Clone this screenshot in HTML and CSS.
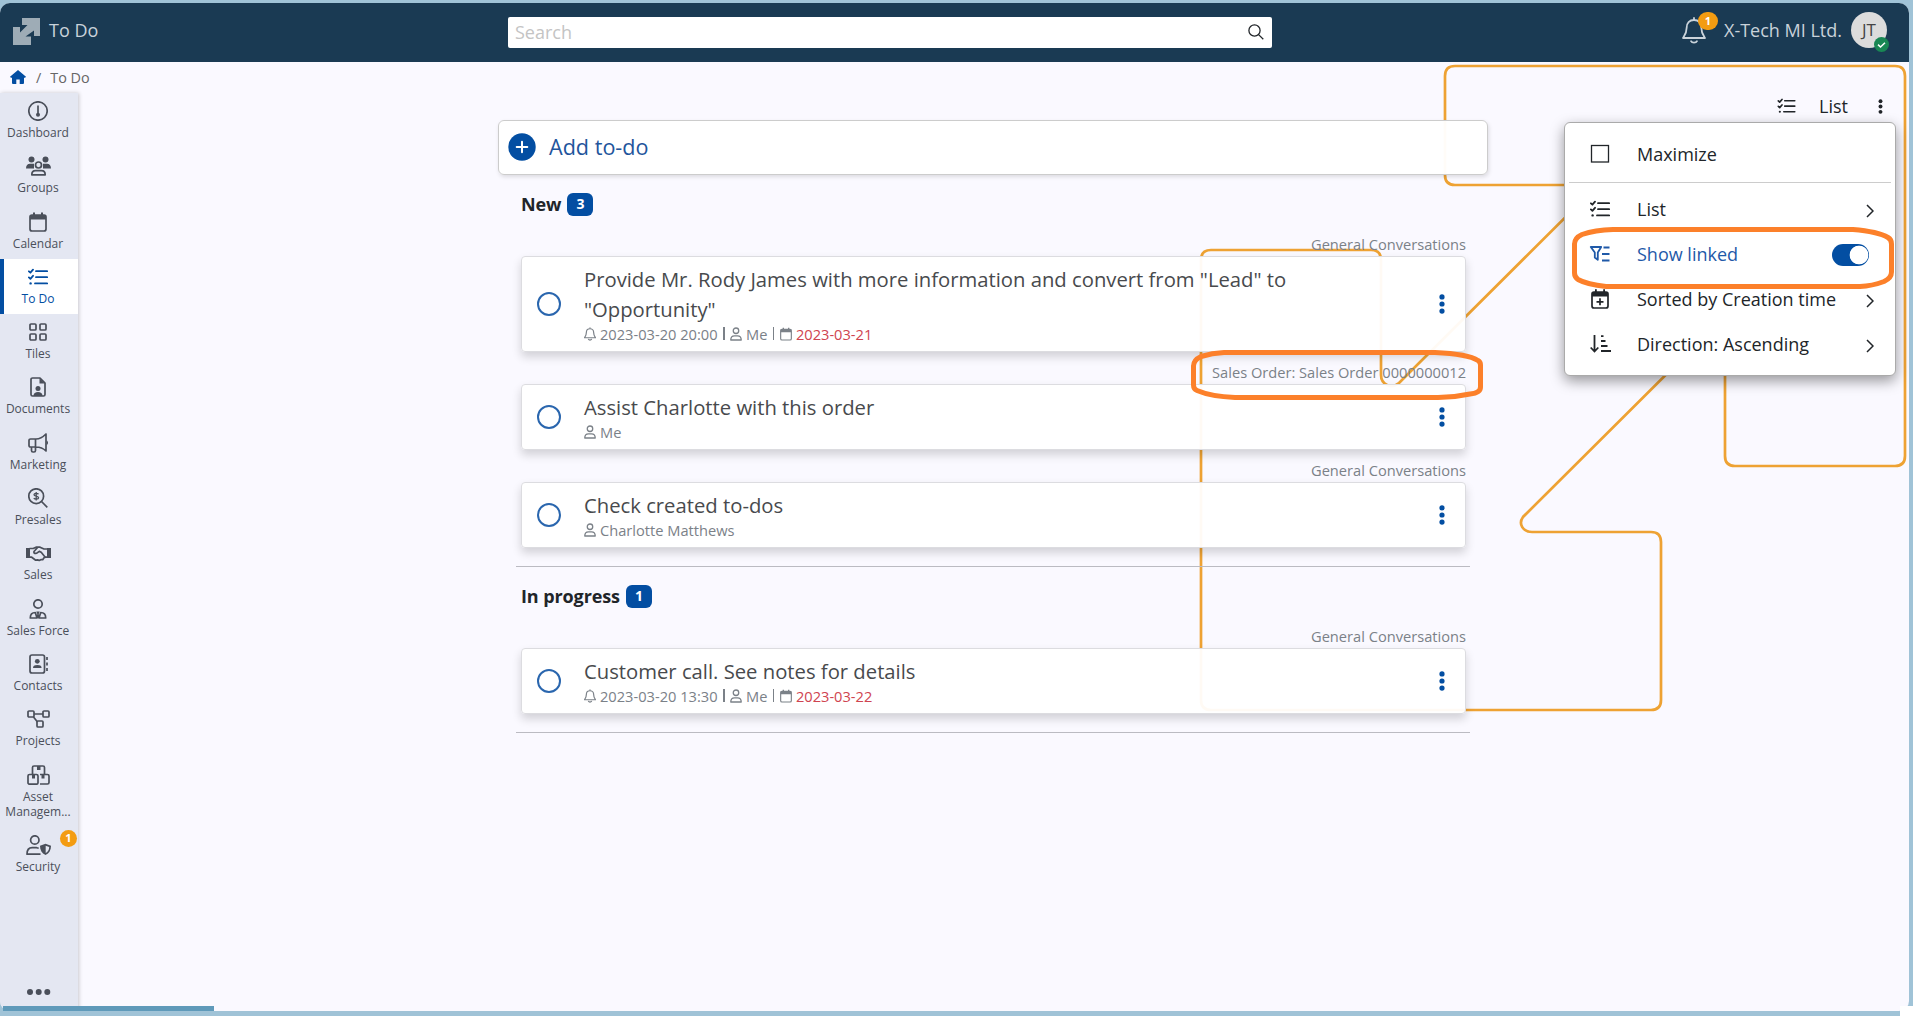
FILE: index.html
```html
<!DOCTYPE html>
<html lang="en">
	<head>
		<meta charset="UTF-8" />
		<meta name="viewport" content="width=device-width, initial-scale=1.0" />
		<title>To Do</title>
		<link rel="stylesheet" href="styles.css">
	</head>
	<body>
		<!-- shared icons -->
		<svg class="sprite">
			<symbol id="i-checklist" viewBox="0 0 20 20">
				<g fill="none" stroke="currentColor" stroke-width="1.8" stroke-linecap="round" stroke-linejoin="round">
					<path d="M8 4.2h11.2M8 10.2h11.2M7 16.4h12.2" />
					<path d="M.9 4.3l1.5 1.4L5 2.7M.9 10.4l1.5 1.4L5 8.8" />
				</g>
				<circle cx="2.6" cy="16.4" r="1.2" fill="currentColor" />
			</symbol>
			<symbol id="i-calendar" viewBox="0 0 18 20">
				<rect x="1" y="3" width="16" height="16" rx="2" fill="none" stroke="currentColor" stroke-width="1.7" />
				<path d="M1 3h16v4.5H1zM4 .5h2v3H4zM12 .5h2v3h-2z" fill="currentColor" />
			</symbol>
			<symbol id="i-user" viewBox="0 0 14 16">
				<g fill="none" stroke="currentColor" stroke-width="1.5" stroke-linejoin="round">
					<circle cx="7" cy="4.2" r="3.2" />
					<path d="M.9 15C.9 12 2.700 10.300 5.200 10.300H8.800C11.300 10.300 13.100 12 13.100 15z" />
				</g>
			</symbol>
			<symbol id="i-bell" viewBox="0 0 24 27">
				<g fill="none" stroke="currentColor" stroke-linejoin="round" stroke-linecap="round">
					<path d="M12 1v2M12 3c-4.6 0-7.3 3.3-7.3 7.5 0 5.5-1.7 7.500-3.700 10.500h22c-2-3-3.700-5-3.700-10.500C19.300 6.300 16.600 3 12 3z" />
					<path d="M9 24.200c1 2 5 2 6 0" />
				</g>
			</symbol>
			<symbol id="i-dots" viewBox="0 0 6 20">
				<circle cx="3" cy="2.9" r="2.6" /><circle cx="3" cy="10" r="2.6" /><circle cx="3" cy="17.1" r="2.6" />
			</symbol>
			<symbol id="i-chevron" viewBox="0 0 8 14">
				<path d="M1 1l6 6-6 6" fill="none" stroke="currentColor" stroke-width="1.5" />
			</symbol>
		</svg>

		<div class="app">
			<header class="header">
				<div class="brand">
					<svg class="logo" viewBox="0 0 27 27"><path d="M9 0h18v18h-6v-5.500L12.500 18.500H18V27H0V9h7v5.500L14.500 7H9z" /></svg>
					<span>To Do</span>
				</div>
				<div class="search">
					<span>Search</span>
					<svg viewBox="0 0 16 16"><circle cx="6.5" cy="6.5" r="5.6" /><path d="M10.6 10.6l4.7 4.7" /></svg>
				</div>
				<div class="account">
					<div class="bell">
						<svg><use href="#i-bell" /></svg>
						<span class="count">1</span>
					</div>
					<span class="company">X-Tech MI Ltd.</span>
					<div class="avatar">
						JT
						<svg class="status" viewBox="0 0 15 15"><circle cx="7.5" cy="7.5" r="7.5" /><path d="M4 7.600l2.500 2.400L11 5.800" /></svg>
					</div>
				</div>
			</header>

			<nav class="breadcrumb">
				<svg viewBox="0 0 16 14"><path d="M8 0l8 6.700-.9 1H14V13a1 1 0 0 1-1 1H9.700V9.500H6.300V14H3a1 1 0 0 1-1-1V7.700H.9L0 6.700z" /></svg>
				<span class="slash">/</span>
				<span>To Do</span>
			</nav>

			<div class="body">
				<aside class="sidebar">
					<a class="nav-item">
						<svg viewBox="0 0 20 20"><circle cx="10" cy="10" r="9.2" /><path d="M10 4.500v9" /><circle class="solid" cx="10" cy="13.800" r="2" /></svg>
						<span>Dashboard</span>
					</a>
					<a class="nav-item">
						<svg class="wide" viewBox="0 0 25 20"><g class="solid"><circle cx="5.5" cy="3.5" r="3" /><circle cx="19.5" cy="3.5" r="3" /><path d="M0 12.500c0-3 1.500-4.700 4-4.700h4v4.700zM25 12.500c0-3-1.500-4.700-4-4.700h-4v4.700z" /></g><circle class="halo" cx="12.5" cy="9" r="3" /><path d="M5.800 18.800c0-3 1.700-4.200 3.700-4.200h6c2 0 3.700 1.200 3.700 4.200z" /></svg>
						<span>Groups</span>
					</a>
					<a class="nav-item">
						<svg class="narrow"><use href="#i-calendar" /></svg>
						<span>Calendar</span>
					</a>
					<a class="nav-item active">
						<svg><use href="#i-checklist" /></svg>
						<span>To Do</span>
					</a>
					<a class="nav-item">
						<svg viewBox="0 0 20 20"><rect x="2" y="2" width="6" height="6" rx="1" /><rect x="12" y="2" width="6" height="6" rx="1" /><rect x="2" y="12" width="6" height="6" rx="1" /><rect x="12" y="12" width="6" height="6" rx="1" /></svg>
						<span>Tiles</span>
					</a>
					<a class="nav-item">
						<svg viewBox="0 0 20 20"><path d="M4.500 1H12l5 5v11.500a1.500 1.500 0 0 1-1.500 1.500h-11A1.500 1.500 0 0 1 3 17.500v-15A1.500 1.500 0 0 1 4.500 1z" /><path class="solid" d="M11.500 1v5.500H17zM5.500 19c0-3 2-4 4.500-4s4.500 1 4.500 4z" /><circle class="solid" cx="10" cy="11.5" r="2.5" /></svg>
						<span>Documents</span>
					</a>
					<a class="nav-item">
						<svg viewBox="0 0 20 20"><path d="M18 1v17c-3-3-6-4-10-4H2.500A1.500 1.500 0 0 1 1 12.500v-5A1.500 1.500 0 0 1 2.500 6H8c4 0 7-2 10-5zM7.500 6v8M3.500 14v3.500a1.500 1.500 0 0 0 1.500 1.500h1a1.500 1.500 0 0 0 1.500-1.500V14" /><path class="solid" d="M18.500 7.500c2 .7 2 3.800 0 4.500z" /></svg>
						<span>Marketing</span>
					</a>
					<a class="nav-item">
						<svg viewBox="0 0 20 20"><circle cx="8.2" cy="8.2" r="7.4" /><path d="M13.500 13.500L19.300 19.300" /><path class="thin" d="M10.500 6.200c-.5-1-4.500-1.400-4.500.5 0 2 4.600 1 4.600 3.100 0 1.900-4 1.700-4.800.4M8.200 3.900v8.700" /></svg>
						<span>Presales</span>
					</a>
					<a class="nav-item">
						<svg class="wide" viewBox="0 0 25 20"><path class="solid" d="M0 5h4v10H0zM21 5h4v10h-4z" /><path d="M3.500 5.500h3.700L10 4.200h4l4 1.800h3.500M3.500 14.200h2.200l4 3 2-.3 1.500.6 2-1 1.500.2 1.300-2 1.500-.5H21.500M15 9l4 5M14.500 4.200h-2.700L8 8.500c-.6 2 2 2.500 3.500 1.200L13.300 8.300 15.500 9.500" /></svg>
						<span>Sales</span>
					</a>
					<a class="nav-item">
						<svg viewBox="0 0 20 20"><circle cx="10" cy="5" r="4.2" /><path d="M2.300 19c0-3.500 1.900-5.500 5-5.500L9 19zM17.700 19c0-3.500-1.900-5.500-5-5.500L11 19z" /><path class="solid" d="M8.300 12.500h3.400L10.700 15l1 4H8.300l1-4z" /></svg>
						<span>Sales Force</span>
					</a>
					<a class="nav-item">
						<svg viewBox="0 0 20 20"><rect x="2" y="1" width="14.5" height="18" rx="2" /><circle class="solid" cx="9.3" cy="7.3" r="2.4" /><path class="solid" d="M5 14c0-2 1-3 4.300-3s4.300 1 4.300 3z" /><path d="M19 3v3M19 8.500v3M19 14v3" /></svg>
						<span>Contacts</span>
					</a>
					<a class="nav-item">
						<svg class="wide" viewBox="0 0 25 20"><rect x="2" y="2" width="6" height="6" rx="1" /><rect x="17" y="2" width="6" height="6" rx="1" /><rect x="11" y="12" width="6" height="6" rx="1" /><path d="M8 5h9M7.500 8l4 5" /></svg>
						<span>Projects</span>
					</a>
					<a class="nav-item">
						<svg class="wide" viewBox="0 0 25 20"><path d="M6.500 9V2.500a1.500 1.500 0 0 1 1.500-1.500h9a1.500 1.500 0 0 1 1.500 1.500V9" /><rect x="2" y="9.5" width="10" height="9.7" rx="1.5" /><path d="M14 9.500h7.500a1.500 1.500 0 0 1 1.500 1.500v6.500a1.500 1.500 0 0 1-1.500 1.500H14" /><path class="solid" d="M11 1h3.500v4H11zM6 10h3v3.500H6zM15.500 10h3v3.500h-3z" /></svg>
						<span>Asset Managem...</span>
					</a>
					<a class="nav-item">
						<svg class="wide" viewBox="0 0 25 20"><circle cx="8.8" cy="5" r="4.2" /><path d="M14.500 19.200H1c0-4.500 2-6.500 5.200-6.500h4.500l2 .5" /><path class="solid" d="M19.500 8.800l5.500 2c0 4.500-1.800 7.500-5.500 9.200-3.700-1.700-5.500-4.700-5.500-9.200z" /><path class="cut" d="M19.700 10.700l3.500 1.300c0 2.700-1.200 4.700-3.500 6z" /></svg>
						<span>Security</span>
						<b class="count">1</b>
					</a>
					<svg class="more" viewBox="0 0 24 6"><circle cx="3" cy="3" r="3" /><circle cx="11.7" cy="3" r="3" /><circle cx="20.3" cy="3" r="3" /></svg>
				</aside>

				<main class="main">
					<div class="toolbar">
						<svg class="tool-list"><use href="#i-checklist" /></svg>
						<span>List</span>
						<svg class="tool-dots"><use href="#i-dots" /></svg>
					</div>

					<div class="todos">
						<div class="add">
							<svg viewBox="0 0 28 28"><circle cx="14" cy="14" r="13.7" /><path d="M14 8.700v10.600M8.700 14h10.600" /></svg>
							<span>Add to-do</span>
						</div>

						<section class="group">
							<h2>New <span class="badge">3</span></h2>
							<div class="source">General Conversations</div>
							<div class="card">
								<span class="circle"></span>
								<div class="info">
									<p class="title">Provide Mr. Rody James with more information and convert from "Lead" to "Opportunity"</p>
									<p class="meta"><svg><use href="#i-bell" /></svg>2023-03-20 20:00<i></i><svg><use href="#i-user" /></svg>Me<i></i><svg><use href="#i-calendar" /></svg><span class="late">2023-03-21</span></p>
								</div>
								<svg class="dots"><use href="#i-dots" /></svg>
							</div>
							<div class="source">Sales Order: Sales Order 0000000012</div>
							<div class="card">
								<span class="circle"></span>
								<div class="info">
									<p class="title">Assist Charlotte with this order</p>
									<p class="meta"><svg><use href="#i-user" /></svg>Me</p>
								</div>
								<svg class="dots"><use href="#i-dots" /></svg>
							</div>
							<div class="source">General Conversations</div>
							<div class="card">
								<span class="circle"></span>
								<div class="info">
									<p class="title">Check created to-dos</p>
									<p class="meta"><svg><use href="#i-user" /></svg>Charlotte Matthews</p>
								</div>
								<svg class="dots"><use href="#i-dots" /></svg>
							</div>
						</section>

						<section class="group">
							<h2>In progress <span class="badge">1</span></h2>
							<div class="source">General Conversations</div>
							<div class="card">
								<span class="circle"></span>
								<div class="info">
									<p class="title">Customer call. See notes for details</p>
									<p class="meta"><svg><use href="#i-bell" /></svg>2023-03-20 13:30<i></i><svg><use href="#i-user" /></svg>Me<i></i><svg><use href="#i-calendar" /></svg><span class="late">2023-03-22</span></p>
								</div>
								<svg class="dots"><use href="#i-dots" /></svg>
							</div>
						</section>
					</div>

					<div class="menu">
						<div class="menu-item">
							<svg viewBox="0 0 20 20"><rect x="1.5" y="1.5" width="17" height="16.5" fill="none" stroke="currentColor" stroke-width="1.3" /></svg>
							<span>Maximize</span>
						</div>
						<hr />
						<div class="menu-item">
							<svg><use href="#i-checklist" /></svg>
							<span>List</span>
							<svg class="chevron"><use href="#i-chevron" /></svg>
						</div>
						<div class="menu-item on">
							<svg viewBox="0 0 20 20"><g fill="none" stroke="currentColor" stroke-width="1.8" stroke-linejoin="round"><path d="M.8 3h10.400L7.800 8.500v7.300L4.800 13.500v-5zM13.500 3.500h6M12 10h7.500M12 16.500h7.500" /></g></svg>
							<span>Show linked</span>
							<span class="toggle"></span>
						</div>
						<div class="menu-item">
							<svg viewBox="0 0 20 20"><rect x="2" y="3" width="16" height="16" rx="2" fill="none" stroke="currentColor" stroke-width="1.7" /><path d="M2 3h16v4.500H2zM5 .2h1.800v3H5zM13.200.2H15v3h-1.800z" fill="currentColor" /><path d="M10 9.300v7M6.500 12.800h7" fill="none" stroke="currentColor" stroke-width="1.7" /></svg>
							<span>Sorted by Creation time</span>
							<svg class="chevron"><use href="#i-chevron" /></svg>
						</div>
						<div class="menu-item">
							<svg viewBox="0 0 20 20"><path d="M4.500 1v16M.7 13.500l3.800 4 3.800-4M11 2.200h2.500M11 7h4.500M11 12h6.500M11 17h10" fill="none" stroke="currentColor" stroke-width="1.8" /></svg>
							<span>Direction: Ascending</span>
							<svg class="chevron"><use href="#i-chevron" /></svg>
						</div>
					</div>
				</main>
			</div>

			<!-- circuit pattern behind the page -->
			<svg class="pattern" viewBox="0 0 1909 1008">
				<path d="M1725 179V453q0 10 10 10h160q10 0 10-10V73q0-10-10-10H1455q-10 0-10 10V172q0 10 10 10h270" />
				<path d="M1650 130L1399 380q-6 5-12 2-6-3-6-10V257q0-10-10-10H1211q-10 0-10 10V697q0 10 10 10H1651q10 0 10-10V539q0-10-10-10H1532c-9 0-14-8-9-15L1740 298" />
			</svg>

			<!-- highlights -->
			<svg class="marks" viewBox="0 0 1909 1008">
				<path d="M1224 349.500H1435Q1468 351 1478 357.500 1480.500 359 1480.500 362V384Q1480.500 390 1470 391 1454 394.500 1438 394.500H1235Q1211 393.500 1197 387.500 1193.500 386 1193.500 382V363Q1193.500 357 1201 353.500 1212 350 1224 349.500z" />
				<path d="M1613 226.500H1853Q1878 228.500 1888 234.500 1891.500 236.500 1891.500 241V269Q1891.500 275 1884 278.500 1872 283 1860 283.500H1606Q1587 281.500 1578 276.500 1574.500 274 1574.500 270V241Q1574.500 235 1582 231.500 1595 227 1613 226.500z" />
			</svg>
		</div>
		<div class="progress"></div>
		<div class="grip"></div>
	</body>
</html>
```
FILE: styles.css
```css
* {
	box-sizing: border-box;
	margin: 0;
	padding: 0;
}

body {
	font-family: "Open Sans", sans-serif;
	font-size: 18px;
	color: #212529;
	background-color: #a0c3d7;
	height: 1016px;
	padding: 3px 4px 5px 0;
	overflow: hidden;
	position: relative;
}

svg {
	display: block;
	flex-shrink: 0;
	fill: currentColor;
}

.sprite {
	position: absolute;
	width: 0;
	height: 0;
}

.app {
	position: relative;
	z-index: 0;
	display: flex;
	flex-direction: column;
	height: 1008px;
	background-color: #faf9ff;
	border-radius: 10px;
	overflow: hidden;
}

.header {
	display: grid;
	grid-template-columns: 508px 764px 1fr;
	align-items: center;
	height: 59px;
	flex-shrink: 0;
	background-color: #1a3a53;
	color: #c9d2da;
}

.brand {
	display: flex;
	align-items: center;
	gap: 9px;
	padding-left: 13px;
	padding-bottom: 5px;
}

.logo {
	width: 27px;
	height: 27px;
	color: #9eacb6;
	margin-top: 2px;
}

.search {
	display: flex;
	align-items: center;
	justify-content: space-between;
	height: 31px;
	margin-bottom: 1px;
	padding: 0 7px 0 7px;
	background-color: white;
	border-radius: 2px;
	color: #c4c4c4;
}

.search svg {
	width: 16px;
	height: 16px;
	margin-right: 1px;
	fill: none;
	stroke: #212529;
	stroke-width: 1.3;
}

.account {
	display: flex;
	align-items: center;
	justify-content: flex-end;
	padding-right: 22px;
	padding-bottom: 5px;
}

.bell {
	position: relative;
	margin-right: 18px;
}

.bell svg {
	width: 24px;
	height: 27px;
	stroke-width: 1.8;
}

.count {
	position: absolute;
	background-color: #f39c12;
	color: white;
	font-size: 11px;
	font-weight: bold;
	line-height: 17px;
	text-align: center;
	border-radius: 9px;
	width: 17px;
	height: 17px;
}

.bell .count {
	top: -5px;
	left: 16px;
	width: 20px;
	height: 18px;
}

.company {
	margin-right: 9px;
}

.avatar {
	position: relative;
	width: 36px;
	height: 36px;
	border-radius: 50%;
	background-color: #dcdcdc;
	color: #444;
	font-size: 17px;
	line-height: 35px;
	text-align: center;
}

.status {
	position: absolute;
	right: -2px;
	bottom: -4px;
	width: 15px;
	height: 15px;
	color: #198754;
}

.status path {
	fill: none;
	stroke: white;
	stroke-width: 1.5;
}

.breadcrumb {
	display: flex;
	align-items: center;
	height: 31px;
	flex-shrink: 0;
	padding: 0 0 1px 10px;
	font-size: 14.4px;
	color: #666;
}

.breadcrumb svg {
	width: 16px;
	height: 14px;
	color: #034ea2;
}

.slash {
	margin: 0 9px 0 10px;
}

.body {
	display: flex;
	flex: 1;
}

.sidebar {
	display: flex;
	flex-direction: column;
	width: 78px;
	background-color: #e4e7f2;
	box-shadow: 1px 0 4px rgba(0, 0, 0, 0.2);
	color: #4a4f5a;
}

.nav-item {
	position: relative;
	display: flex;
	flex-direction: column;
	align-items: center;
	padding: 8px 3px 8.3px 1px;
	font-size: 12px;
	line-height: 15px;
	text-align: center;
}

.nav-item span {
	margin-top: 4px;
}

.nav-item svg {
	width: 20px;
	height: 20px;
	fill: none;
	stroke: currentColor;
	stroke-width: 1.7;
	stroke-linejoin: round;
}

.nav-item svg use {
	stroke: none;
}

.nav-item svg.wide {
	width: 25px;
}

.nav-item svg.narrow {
	width: 18px;
}

.nav-item .solid {
	fill: currentColor;
	stroke: none;
}

.nav-item .halo {
	fill: #e4e7f2;
}

.nav-item .thin {
	stroke-width: 1.3;
}

.nav-item .cut {
	fill: #e4e7f2;
	stroke: none;
}

.nav-item.active {
	background-color: white;
	box-shadow: inset 4px 0 #034ea2;
	color: #034ea2;
}

.nav-item .count {
	top: 3px;
	right: 1px;
	line-height: 16px;
}

.more {
	width: 24px;
	height: 6px;
	margin: auto 0 16px 27px;
}

.main {
	position: relative;
	flex: 1;
}

.toolbar {
	display: flex;
	align-items: center;
	justify-content: flex-end;
	height: 27px;
	padding: 0 26px 2px 0;
}

.tool-list {
	width: 19px;
	height: 18px;
	margin-right: 23px;
}

.tool-dots {
	width: 5px;
	height: 15px;
	margin: 2px 0 0 30px;
}

.todos {
	width: 990px;
	margin-left: 420px;
}

.add {
	display: flex;
	align-items: center;
	gap: 13px;
	height: 55px;
	padding: 0 0 3px 9px;
	background-color: rgba(255, 255, 255, 0.97);
	border: 1px solid #ccc;
	border-radius: 6px;
	box-shadow: 1px 2px 4px rgba(0, 0, 0, 0.12);
	color: #1f559c;
	font-size: 21.6px;
}

.add svg {
	width: 28px;
	height: 28px;
	margin-top: 1px;
	fill: #034ea2;
}

.add path {
	stroke: white;
	stroke-width: 2;
	stroke-linecap: round;
}

.group {
	margin: 0 18px;
	padding: 0 4px 18px 5px;
	border-bottom: 1px solid #bbbbc2;
}

.group h2 {
	display: flex;
	align-items: center;
	gap: 6px;
	height: 59px;
	font-size: 18px;
	letter-spacing: -0.1px;
	padding-bottom: 1px;
}

.badge {
	width: 26px;
	height: 23px;
	margin-top: 1px;
	background-color: #034ea2;
	border-radius: 6px;
	color: white;
	font-size: 14px;
	line-height: 21px;
	text-align: center;
}

.source {
	height: 22px;
	color: #7b8188;
	font-size: 14.65px;
	line-height: 20px;
	text-align: right;
}

.card + .source {
	margin-top: 10px;
}

.card {
	display: flex;
	align-items: center;
	padding: 7px 20px 7px 15px;
	background-color: rgba(255, 255, 255, 0.95);
	border: 1px solid #dcdce0;
	border-radius: 4px;
	box-shadow: 0 5px 10px rgba(0, 0, 0, 0.16);
}

.circle {
	width: 24px;
	height: 24px;
	margin-bottom: 1px;
	border: 2px solid #2a66ae;
	border-radius: 50%;
	flex-shrink: 0;
}

.info {
	flex: 1;
	padding: 0 130px 0 23px;
}

.title {
	color: #484a4d;
	font-size: 20.25px;
	line-height: 30px;
}

.meta {
	display: flex;
	align-items: center;
	height: 20px;
	padding-bottom: 1px;
	color: #7b8188;
	font-size: 14.65px;
}

.meta svg {
	width: 12px;
	height: 14px;
	margin-right: 4px;
	stroke-width: 2.4;
}

.meta i {
	width: 1.5px;
	height: 13px;
	margin: 0 5.5px;
	background-color: #7b8188;
}

.late {
	color: #cf4450;
}

.dots {
	width: 6px;
	height: 20px;
	color: #034ea2;
}

.menu {
	position: absolute;
	top: 29px;
	right: 13px;
	width: 332px;
	height: 254px;
	padding-top: 8px;
	background-color: white;
	border: 1px solid #aaa;
	border-radius: 6px;
	box-shadow: 0 5px 14px rgba(0, 0, 0, 0.4);
}

.menu hr {
	margin: 6px 4px 3px;
	border: 0;
	border-top: 1px solid #ccc;
}

.menu-item {
	display: flex;
	align-items: center;
	height: 45px;
	padding: 0 21px 0 25px;
}

.menu-item svg {
	width: 20px;
	height: 20px;
	margin-right: 27px;
	overflow: visible;
}

.menu-item .chevron {
	width: 8px;
	height: 14px;
	margin: 4px 0 0 auto;
}

.menu-item.on {
	color: #1f59a8;
}

.toggle {
	width: 37px;
	height: 22px;
	margin: 2px 5px 0 auto;
	border-radius: 11px;
	background: radial-gradient(circle at 27px 11px, white 9px, #034ea2 9.7px);
}

.pattern,
.marks {
	position: absolute;
	top: 0;
	left: 0;
	width: 1909px;
	height: 1008px;
	fill: none;
	stroke: #eea233;
	stroke-width: 2.7;
	z-index: -1;
	pointer-events: none;
}

.marks {
	stroke: #fc802a;
	stroke-width: 5;
	z-index: 2;
}

.progress {
	position: absolute;
	left: 3px;
	top: 1006px;
	width: 211px;
	height: 5px;
	background-color: #5f9aba;
}

.grip {
	position: absolute;
	right: 0;
	bottom: 0;
	width: 13px;
	height: 10px;
	background-color: white;
}
```
